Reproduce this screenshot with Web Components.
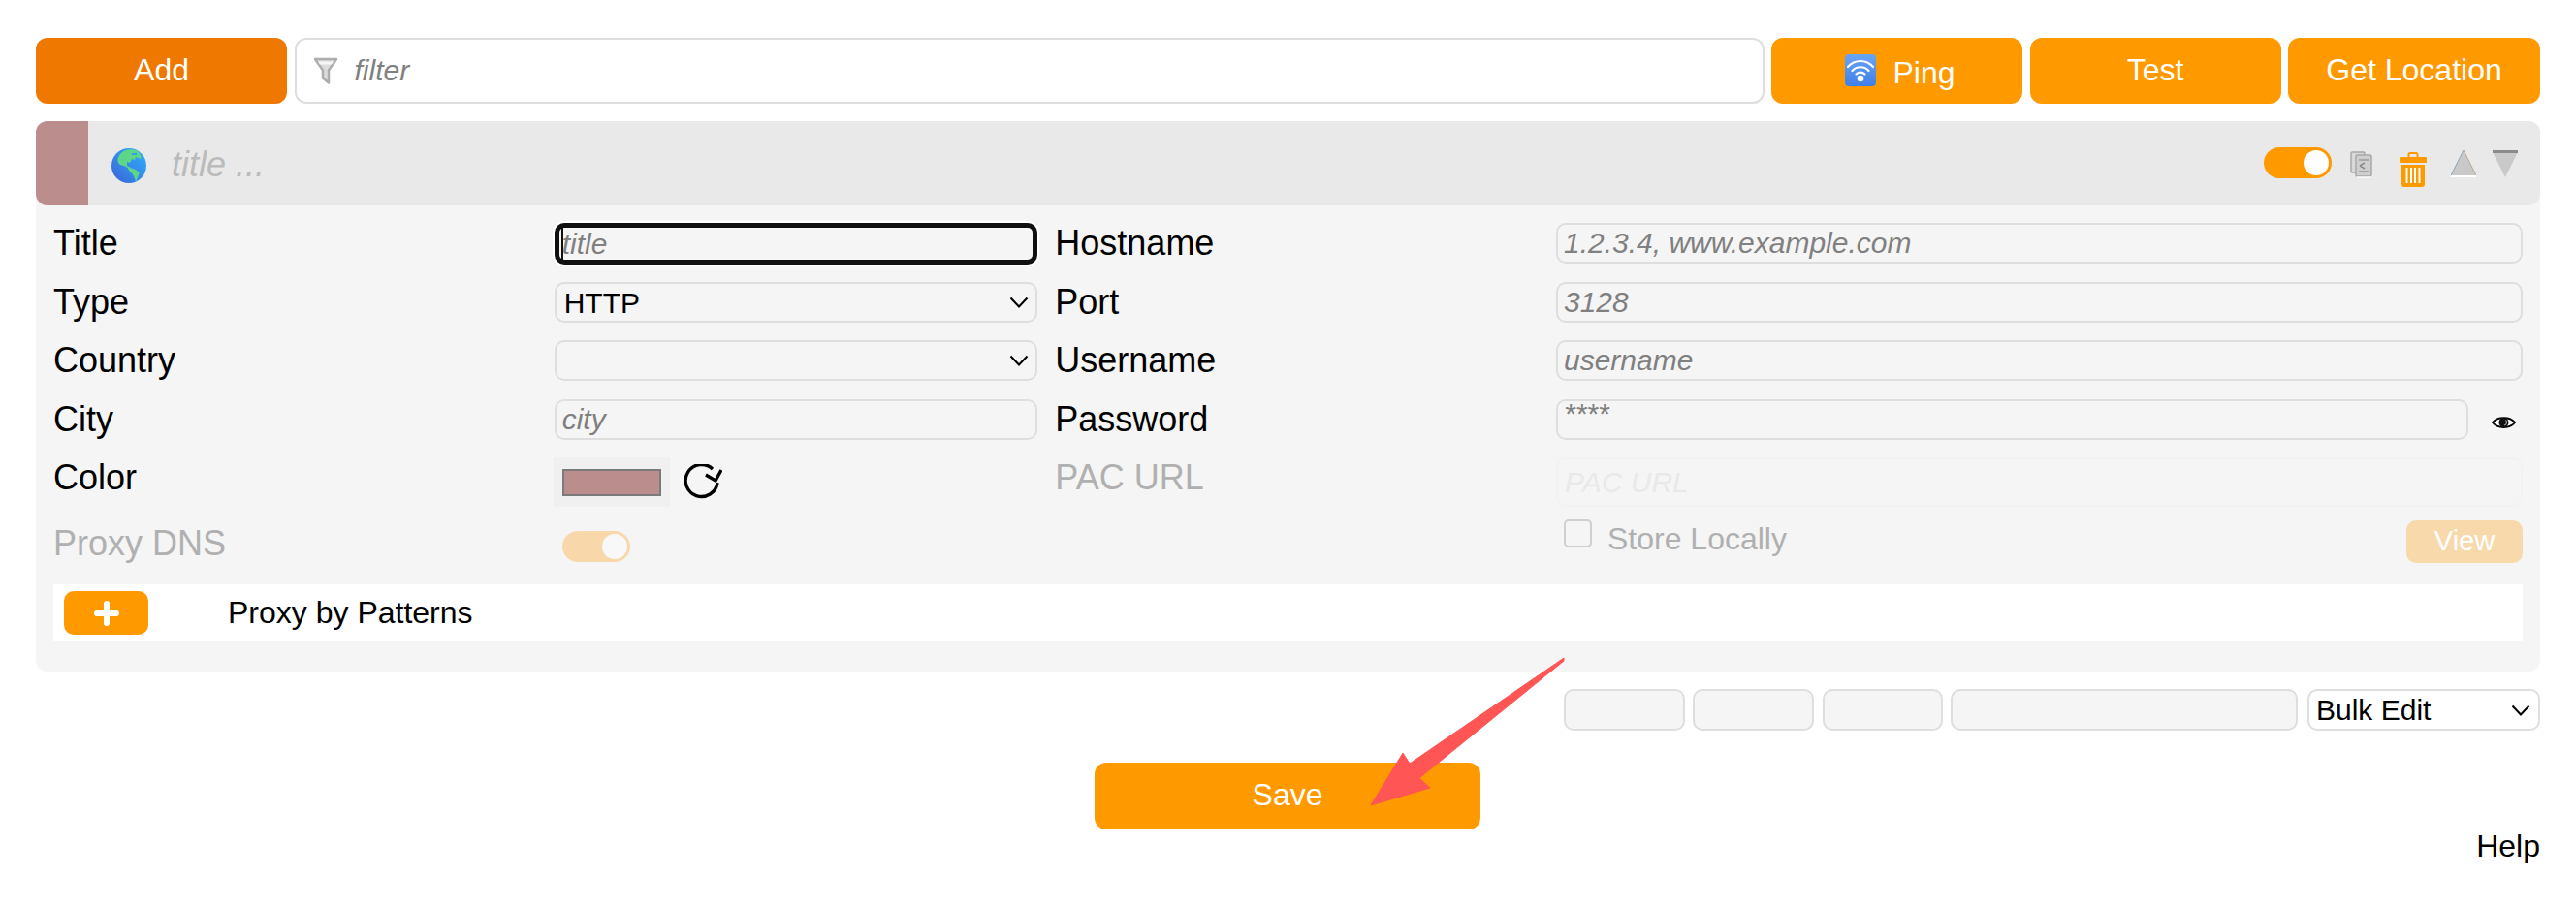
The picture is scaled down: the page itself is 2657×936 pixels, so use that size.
<!DOCTYPE html>
<html lang="en">
<head>
<meta charset="utf-8">
<title>Proxies</title>
<style>
  html, body { margin: 0; background: #fff; }
  body { font-family: "Liberation Sans", Arial, sans-serif; color: #000; }
</style>
</head>
<body>
<fp-app></fp-app>

<script>
const CHEVRON = `url("data:image/svg+xml,%3Csvg xmlns='http://www.w3.org/2000/svg' width='20' height='12'%3E%3Cpath d='M1.500 1.500 10 10.500 18.500 1.500' fill='none' stroke='%23000' stroke-width='2'/%3E%3C/svg%3E")`

const ICONS = {
  wifi: `<svg width="32" height="33" viewBox="0 0 32 33"><defs><linearGradient id="w" x1="0" y1="0" x2="0" y2="1"><stop offset="0" stop-color="#6aa5f5"/><stop offset="1" stop-color="#3f7fea"/></linearGradient></defs><rect width="32" height="33" rx="4" fill="url(#w)"/><g fill="none" stroke="#fff" stroke-width="2.2" stroke-linecap="round"><path d="M3 13C10 5 22 5 29 13"/><path d="M7.500 17C12 12 20 12 24.500 17"/><path d="M11.500 20.500C14 18 18 18 20.500 20.500"/></g><ellipse cx="16" cy="25" rx="3.400" ry="3.200" fill="#fff"/></svg>`,
  funnel: `<svg width="26" height="28" viewBox="0 0 26 28"><path d="M2 2H24L16 13.500V26.500L10 21.500V13.500Z" fill="#dcdcdc" stroke="#adadad" stroke-width="2.500" stroke-linejoin="round"/><path d="M5 4.500H21L19 7.500H7Z" fill="#f6f6f6"/></svg>`,
  globe: `<svg width="36" height="36" viewBox="0 0 36 36"><defs><linearGradient id="g" x1="0" y1="1" x2="1" y2="0"><stop offset="0" stop-color="#3a62d8"/><stop offset="1" stop-color="#2fb4fb"/></linearGradient></defs><circle cx="18" cy="18" r="18" fill="url(#g)"/><path d="M10 5C14 .8 22 .3 27 3 30 6 31 9 30 11L25 9 24 12 21 11 19 15 16 14 16 18 20 20 19 22 15 19 9 17C5 14 6 9 10 5Z" fill="#5ed68a"/><path d="M17 20 23 21 29 25 27 30 25 35C24 32 24 29 21 26 19 24 17 22 17 20Z" fill="#5ed68a"/><path d="M21 5h5v2h-5z" fill="#2f9ff0"/></svg>`,
  copy: `<svg width="24" height="28" viewBox="0 0 24 28"><g stroke="#a8a8a8" stroke-width="1.500" fill="#d9d9d9"><rect x="1" y="1" width="14" height="21" rx="1.500"/><rect x="6" y="4" width="16" height="22" rx="1.500" fill="#cfcfcf"/></g><path d="M9 9h10M9 21h10" stroke="#9c9c9c" stroke-width="1.500"/><path d="M10 15l5-3M10 15l5 3" stroke="#8c8c8c" stroke-width="1.500" fill="none"/><path d="M7 27h15" stroke="#fafafa" stroke-width="1.500"/></svg>`,
  trash: `<svg width="28" height="36" viewBox="0 0 28 36"><path d="M9.500 6V2.500Q9.500 1 11 1H17Q18.500 1 18.500 2.500V6" fill="none" stroke="#f90" stroke-width="2"/><rect y="5" width="28" height="6" rx="1" fill="#f90"/><path d="M2 13H26V33Q26 36 23 36H5Q2 36 2 33Z" fill="#f90"/><path d="M7.500 16V32M12 16V32M16 16V32M20.500 16V32" stroke="#fff" stroke-width="2"/></svg>`,
  up: `<svg width="26" height="28" viewBox="0 0 26 28"><path d="M13 0 26 26H0Z" fill="#c9c9c9"/><path d="M13 0 0 26" stroke="#8aa3bb" stroke-width="1"/><path d="M13 0 26 26" stroke="#b9a48e" stroke-width="1"/><path d="M0 27H26" stroke="#fff" stroke-width="2"/></svg>`,
  down: `<svg width="26" height="28" viewBox="0 0 26 28"><path d="M0 2H26L13 28Z" fill="#c9c9c9"/><path d="M0 1.500H26" stroke="#8b8b8b" stroke-width="3"/></svg>`,
  eye: `<svg width="25" height="14" viewBox="0 0 25 14"><path d="M1 7C6 .5 19 .5 24 7 19 13.500 6 13.500 1 7Z" fill="#fff" stroke="#000" stroke-width="2"/><circle cx="12.500" cy="7" r="5" fill="#111"/><path d="M14.500 4.500A3.200 3.200 0 0 1 13 10" fill="none" stroke="#999" stroke-width="1.200"/></svg>`,
  refresh: `<svg width="40" height="36" viewBox="0 0 40 36"><path d="M30 5A16.500 16.500 0 1 0 35 19" fill="none" stroke="#000" stroke-width="3.400"/><path d="M23 11 33 17 39 6" fill="none" stroke="#000" stroke-width="3.400"/></svg>`,
  plus: `<svg width="26" height="26" viewBox="0 0 26 26"><path d="M13 3V23M3 13H23" stroke="#fff" stroke-width="6" stroke-linecap="round"/></svg>`
}

// orange button, pass the label in the slot
class FpButton extends HTMLElement {
  constructor() {
    super()
    this.attachShadow({ mode: 'open' })
    this.shadowRoot.innerHTML = `
      <style>
        :host {
          display: flex;
          align-items: center;
          justify-content: center;
          box-sizing: border-box;
          height: 68px;
          background: #f90;
          color: #fff;
          font-size: 32px;
          border-radius: 12px;
          padding-bottom: 2px;
        }
        :host([dark]) { background: #ef7800; }
      </style>
      <slot></slot>
    `
  }
}

class FpToggle extends HTMLElement {
  constructor() {
    super()
    this.attachShadow({ mode: 'open' })
    this.shadowRoot.innerHTML = `
      <style>
        :host {
          display: block;
          box-sizing: border-box;
          width: 70px;
          height: 32px;
          background: #f90;
          border-radius: 16px;
          position: relative;
        }
        :host([disabled]) { opacity: .3; }
        i {
          position: absolute;
          right: 3px;
          top: 3px;
          width: 26px;
          height: 26px;
          border-radius: 50%;
          background: #fff;
        }
      </style>
      <i></i>
    `
  }
}

class FpToolbar extends HTMLElement {
  constructor() {
    super()
    this.attachShadow({ mode: 'open' })
    this.shadowRoot.innerHTML = `
      <style>
        :host {
          display: grid;
          grid-template-columns: 259px 1fr 259px 259px 260px;
          column-gap: 7.500px;
          height: 68px;
        }
        .filter {
          display: flex;
          align-items: center;
          box-sizing: border-box;
          border: 2.500px solid #dedede;
          border-radius: 12px;
          padding-left: 17px;
          gap: 17px;
        }
        input {
          flex: 1;
          min-width: 0;
          border: 0;
          outline: 0;
          background: none;
          padding: 0;
          font: italic 30px "Liberation Sans", Arial, sans-serif;
        }
        input::placeholder { color: #808080; }
        .ping { display: inline-flex; align-items: center; gap: 17px; margin: 7px 0 0 7px; }
        .ping svg { margin-top: -6px; }
      </style>
      <fp-button dark>Add</fp-button>
      <div class="filter">${ICONS.funnel}<input placeholder="filter"></div>
      <fp-button><span class="ping">${ICONS.wifi}Ping</span></fp-button>
      <fp-button>Test</fp-button>
      <fp-button>Get Location</fp-button>
    `
  }
}

class FpCard extends HTMLElement {
  constructor() {
    super()
    this.attachShadow({ mode: 'open' })
    this.shadowRoot.innerHTML = `
      <style>
        :host {
          display: block;
          margin-top: 18px;
          background: #f5f5f5;
          border-radius: 12px;
          font-size: 36px;
        }
        * { box-sizing: border-box; }
        header {
          display: flex;
          align-items: center;
          height: 87px;
          background: #e9e9e9;
          border-radius: 12px;
          overflow: hidden;
        }
        .tab { width: 54px; align-self: stretch; background: #bb8e8d; }
        .globe { display: flex; margin: 4px 26px 0 24px; }
        .name { flex: 1; color: #bbb; font-style: italic; font-size: 36px; margin-top: 2px; }
        .tools { display: flex; align-items: flex-start; margin-right: 23px; margin-top: 7px; }
        .tools svg { display: block; }
        .tools .copy { margin: 4px 0 0 19px; }
        .tools .trash { margin: 5px 0 0 27px; }
        .tools .up { margin: 3px 0 0 25px; }
        .tools .down { margin: 3px 0 0 17px; }

        form {
          display: grid;
          grid-template-columns: repeat(3, 498px) 1fr;
          grid-template-rows: 61px 60px 61px 60px 65px 66px;
          column-gap: 18.670px;
          margin: 18px 18px 0;
          align-items: start;
        }
        label { line-height: 42px; padding-bottom: 2px; }
        .off { color: #b0b0b0; }
        .dns { padding-top: 3px; }
        input, select {
          width: 100%;
          height: 42px;
          border: 2.500px solid #dedede;
          border-radius: 10px;
          background-color: #f5f5f5;
          padding: 0 6px;
          margin: 0;
          color: #000;
          outline: 0;
          font: 30px "Liberation Sans", Arial, sans-serif;
        }
        input::placeholder { color: #808080; font-style: italic; }
        select {
          appearance: none;
          padding-left: 8px;
          background-image: ${CHEVRON};
          background-repeat: no-repeat;
          background-position: right 7px center;
        }
        .focused {
          height: 43px;
          border: 0;
          outline: 5px solid #101010;
          outline-offset: -5px;
          box-shadow: 0 0 0 2px #fff;
          padding-left: 8px;
          background-image: linear-gradient(#111, #111);
          background-size: 2px 33px;
          background-position: 7px 5px;
          background-repeat: no-repeat;
        }
        .pac { height: 51px; border-color: #f2f2f2; padding-left: 7px; }
        .pac:disabled::placeholder { color: #e9e9e9; -webkit-text-fill-color: #e9e9e9; }
        .pass { padding-bottom: 13px; }
        .color { display: flex; align-items: center; margin-left: -1px; }
        .swatch {
          display: flex;
          align-items: center;
          justify-content: center;
          width: 120px;
          height: 51px;
          background: #f0f0f0;
        }
        .swatch i { display: block; width: 102px; height: 28px; background: #bb8e8d; border: 2.500px solid #7b7b7b; }
        .color svg { margin: -2px 0 0 14px; }
        .line { display: flex; align-items: center; }
        .eye { display: flex; flex: none; margin: 5px 7px 0 24px; }
        .store { display: flex; align-items: flex-start; padding-left: 8px; font-size: 32px; line-height: 38px; color: #b0b0b0; }
        .box { flex: none; width: 29px; height: 29px; border: 2.500px solid #cfcfcf; border-radius: 5px; margin: -1px 16px 0 0; }
        .view {
          margin-left: auto;
          width: 120px;
          height: 44px;
          background: #f8d9ac;
          color: #fff;
          border-radius: 10px;
          font-size: 29px;
          padding-bottom: 3px;
          display: flex;
          align-items: center;
          justify-content: center;
        }
        .toggle-cell { padding: 11px 0 0 8px; }

        .patterns {
          display: flex;
          align-items: center;
          height: 59px;
          margin: 0 18px;
          background: #fff;
          padding-left: 11px;
          font-size: 32px;
        }
        .plus {
          display: flex;
          align-items: center;
          justify-content: center;
          width: 87px;
          height: 45px;
          border-radius: 10px;
          background: #f90;
          margin-right: 82px;
        }
        footer { height: 31px; }
      </style>
      <header>
        <div class="tab"></div>
        <span class="globe">${ICONS.globe}</span>
        <span class="name">title ...</span>
        <div class="tools">
          <fp-toggle></fp-toggle>
          <span class="copy">${ICONS.copy}</span>
          <span class="trash">${ICONS.trash}</span>
          <span class="up">${ICONS.up}</span>
          <span class="down">${ICONS.down}</span>
        </div>
      </header>
      <form>
        <label>Title</label>
        <input class="focused" placeholder="title">
        <label>Hostname</label>
        <input placeholder="1.2.3.4, www.example.com">

        <label>Type</label>
        <select><option>HTTP</option></select>
        <label>Port</label>
        <input placeholder="3128">

        <label>Country</label>
        <select><option></option></select>
        <label>Username</label>
        <input placeholder="username">

        <label>City</label>
        <input placeholder="city">
        <label>Password</label>
        <div class="line"><input class="pass" placeholder="****"><span class="eye">${ICONS.eye}</span></div>

        <label>Color</label>
        <div class="color"><span class="swatch"><i></i></span>${ICONS.refresh}</div>
        <label class="off">PAC URL</label>
        <input class="pac" placeholder="PAC URL" disabled>

        <label class="off dns">Proxy DNS</label>
        <div class="toggle-cell"><fp-toggle disabled></fp-toggle></div>
        <span></span>
        <div class="store"><span class="box"></span>Store Locally<span class="view">View</span></div>
      </form>
      <div class="patterns">
        <span class="plus">${ICONS.plus}</span>
        Proxy by Patterns
      </div>
      <footer></footer>
    `
  }
}

class FpBulk extends HTMLElement {
  constructor() {
    super()
    this.attachShadow({ mode: 'open' })
    this.shadowRoot.innerHTML = `
      <style>
        :host {
          display: flex;
          justify-content: flex-end;
          gap: 8.500px;
          margin-top: 18px;
        }
        input, select {
          box-sizing: border-box;
          height: 43px;
          border: 2.500px solid #dedede;
          border-radius: 10px;
          background-color: #f5f5f5;
          margin: 0;
          outline: 0;
          font: 30px "Liberation Sans", Arial, sans-serif;
        }
        input { width: 125px; }
        input.narrow { width: 124px; }
        input.wide { width: 358px; }
        select {
          appearance: none;
          width: 240px;
          background-color: #fff;
          background-image: ${CHEVRON};
          background-repeat: no-repeat;
          background-position: right 8px center;
          color: #000;
          padding-left: 7px;
          margin-left: 1.500px;
        }
      </style>
      <input><input><input class="narrow"><input class="wide">
      <select><option>Bulk Edit</option></select>
    `
  }
}

class FpApp extends HTMLElement {
  constructor() {
    super()
    this.attachShadow({ mode: 'open' })
    this.shadowRoot.innerHTML = `
      <style>
        :host {
          display: block;
          position: relative;
          box-sizing: border-box;
          width: 2657px;
          height: 936px;
          padding: 39px 37px 0;
          overflow: hidden;
        }
        .save { display: flex; justify-content: center; margin: 33px 0 0 -1px; }
        .save fp-button { width: 398px; height: 69px; }
        .help { text-align: right; font-size: 32px; line-height: 36px; margin-top: -1px; }
        .arrow { position: absolute; left: 0; top: 0; pointer-events: none; }
      </style>
      <fp-toolbar></fp-toolbar>
      <fp-card></fp-card>
      <fp-bulk></fp-bulk>
      <div class="save"><fp-button>Save</fp-button></div>
      <div class="help">Help</div>
      <svg class="arrow" width="2657" height="936" viewBox="0 0 2657 936">
        <path d="M1613 679 1454 788 1447 777 1414 831 1475 813 1464 803 1613 682Z" fill="#ff5555" stroke="#ff5555" stroke-width="1" stroke-linejoin="round"/>
      </svg>
    `
  }
}

customElements.define('fp-button', FpButton)
customElements.define('fp-toggle', FpToggle)
customElements.define('fp-toolbar', FpToolbar)
customElements.define('fp-card', FpCard)
customElements.define('fp-bulk', FpBulk)
customElements.define('fp-app', FpApp)
</script>
</body>
</html>
